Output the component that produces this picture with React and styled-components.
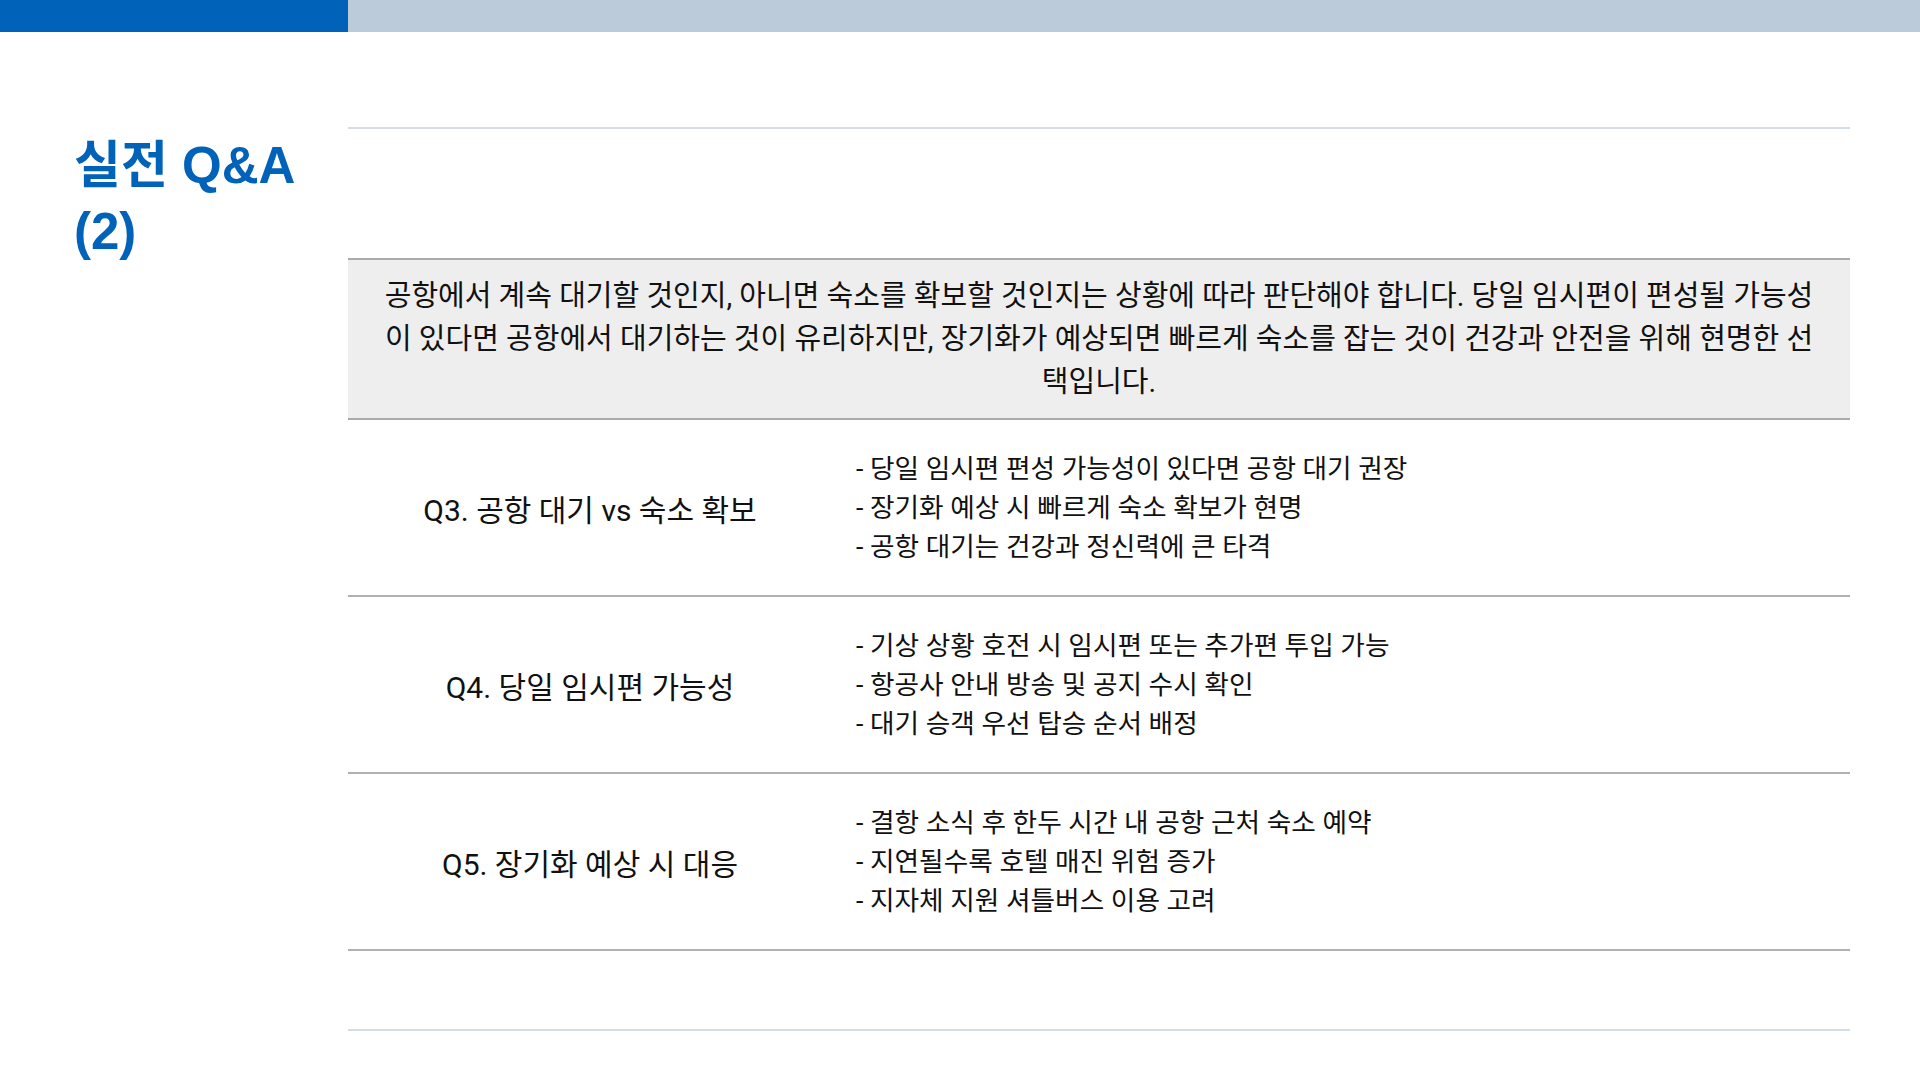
import React from "react";
import styled, { createGlobalStyle } from "styled-components";

const GlobalStyle = createGlobalStyle`
  *, *::before, *::after {
    box-sizing: border-box;
  }
  html, body {
    margin: 0;
    padding: 0;
    background: #ffffff;
  }
  body {
    font-family: Roboto, "Noto Sans CJK KR", sans-serif;
    color: #111111;
  }
`;

const Page = styled.div`
  width: 1920px;
  height: 1080px;
  overflow: hidden;
  background: #ffffff;
  display: flex;
  flex-direction: column;
`;

const TopBar = styled.div`
  display: grid;
  grid-template-columns: 348px 1fr;
  height: 32px;
  flex-shrink: 0;
`;

const BarPart = styled.div`
  background: ${({ $accent }) => ($accent ? "#0062b8" : "#bccbda")};
`;

const Body = styled.div`
  display: grid;
  grid-template-columns: 348px 1502px;
  padding-top: 95px;
`;

const TitleCol = styled.div`
  padding: 6px 0 0 74px;
`;

const Title = styled.h1`
  margin: 0;
  font-family: "Liberation Sans", "Noto Sans CJK KR", sans-serif;
  font-weight: 700;
  font-size: 51px;
  line-height: 66px;
  color: #0062b8;
  width: 240px;
`;

const Content = styled.div`
  display: flex;
  flex-direction: column;
  border-top: 2px solid #d3dde8;
`;

const Spacer = styled.div`
  height: ${({ $h }) => $h}px;
  border-bottom: ${({ $line }) => ($line ? "2px solid #d3dde8" : "none")};
`;

const Intro = styled.p`
  margin: 0;
  background: #eeeeee;
  border-top: 2px solid #aaaaaa;
  border-bottom: 2px solid #aaaaaa;
  padding: 15px 36px 14px;
  font-size: 29px;
  line-height: 43px;
  text-align: center;
`;

const Row = styled.div`
  display: grid;
  grid-template-columns: 484px 1fr;
  align-items: center;
  height: 177px;
  border-bottom: 2px solid #b0b0b0;
`;

const Question = styled.div`
  text-align: center;
  font-size: 30px;
  font-weight: 400;
`;

const Answers = styled.ul`
  margin: 0;
  padding: 2px 0 0 24px;
  list-style: none;
`;

const Answer = styled.li`
  font-size: 26.7px;
  line-height: 39px;
`;

const rows = [
  {
    q: "Q3. 공항 대기 vs 숙소 확보",
    a: [
      "당일 임시편 편성 가능성이 있다면 공항 대기 권장",
      "장기화 예상 시 빠르게 숙소 확보가 현명",
      "공항 대기는 건강과 정신력에 큰 타격",
    ],
  },
  {
    q: "Q4. 당일 임시편 가능성",
    a: [
      "기상 상황 호전 시 임시편 또는 추가편 투입 가능",
      "항공사 안내 방송 및 공지 수시 확인",
      "대기 승객 우선 탑승 순서 배정",
    ],
  },
  {
    q: "Q5. 장기화 예상 시 대응",
    a: [
      "결항 소식 후 한두 시간 내 공항 근처 숙소 예약",
      "지연될수록 호텔 매진 위험 증가",
      "지자체 지원 셔틀버스 이용 고려",
    ],
  },
];

export default function App() {
  return (
    <Page>
      <GlobalStyle />
      <TopBar>
        <BarPart $accent />
        <BarPart />
      </TopBar>
      <Body>
        <TitleCol>
          <Title>실전 Q&amp;A (2)</Title>
        </TitleCol>
        <Content>
          <Spacer $h={129} />
          <Intro>
            공항에서 계속 대기할 것인지, 아니면 숙소를 확보할 것인지는 상황에 따라 판단해야 합니다. 당일 임시편이 편성될 가능성이 있다면 공항에서 대기하는 것이 유리하지만, 장기화가 예상되면 빠르게 숙소를 잡는 것이 건강과 안전을 위해 현명한 선택입니다.
          </Intro>
          {rows.map((r) => (
            <Row key={r.q}>
              <Question>{r.q}</Question>
              <Answers>
                {r.a.map((t) => (
                  <Answer key={t}>- {t}</Answer>
                ))}
              </Answers>
            </Row>
          ))}
          <Spacer $h={80} $line />
        </Content>
      </Body>
    </Page>
  );
}
